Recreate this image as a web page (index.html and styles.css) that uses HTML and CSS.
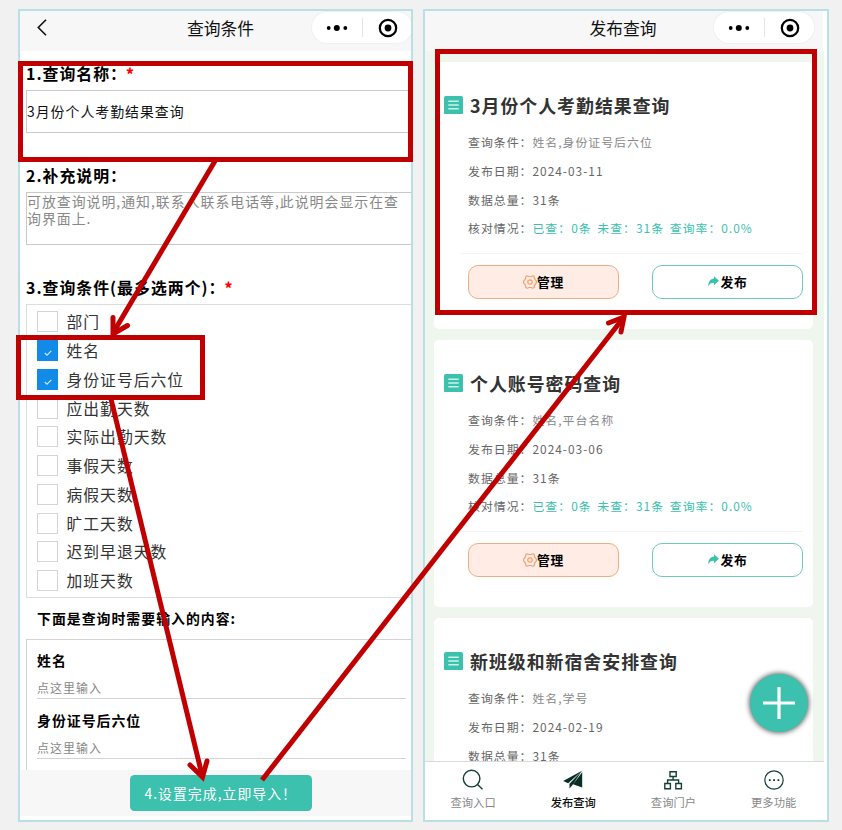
FILE: index.html
```html
<!DOCTYPE html>
<html lang="zh-CN">
<head>
<meta charset="utf-8">
<title>查询</title>
<link rel="stylesheet" href="styles.css">
</head>
<body>
<svg class="defs" width="0" height="0">
  <defs>
    <symbol id="list" viewBox="0 0 19 18.5"><rect width="19" height="18.5" rx="1.8" fill="#3bc1ad"/><path d="M4.3 5.3h10.4M4.3 9h10.4M4.3 12.7h10.4" stroke="#c9f3ea" stroke-width="1.5"/></symbol>
    <symbol id="gear" viewBox="0 0 14 14"><path d="M4.2.8 6 1.5H8L9.8.8 11.2 1.6 11.5 3.6 12.6 5.2 13.4 6.2V7.8L12.6 8.8 11.5 10.4 11.2 12.4 9.8 13.2 8 12.5H6L4.2 13.2 2.8 12.4 2.5 10.4 1.4 8.8.6 7.8V6.2L1.4 5.2 2.5 3.6 2.8 1.6Z" fill="none" stroke="#f5a070" stroke-width="1.2" stroke-linejoin="round"/><circle cx="7" cy="7" r="2.2" fill="none" stroke="#f5a070" stroke-width="1.2"/></symbol>
    <symbol id="share" viewBox="0 0 11 11"><path d="M6 .2 11 4.8 6 9.200V6.9C3.600 6.700 1.700 7.500.300 10.600.1 6 2.200 2.700 6 2.500Z" fill="#3bc1ad"/></symbol>
    <symbol id="capsule" viewBox="0 0 100 31"><circle cx="16.7" cy="16" r="1.9"/><circle cx="24.8" cy="16" r="3"/><circle cx="33.3" cy="16" r="1.9"/><path d="M50.5 6v19" stroke="#e4e4e4"/><circle cx="76" cy="16" r="8.2" fill="none" stroke="#000" stroke-width="2.2"/><circle cx="76" cy="16" r="3.4"/></symbol>
  </defs>
</svg>
<main class="stage">
  <section class="phone form-phone">
    <header class="bar">
      <svg class="back" viewBox="0 0 10 17"><path d="M9 .8 1.3 8.500 9 16.200" fill="none" stroke="#111" stroke-width="1.6"/></svg>
      <h1>查询条件</h1>
      <div class="capsule"><svg viewBox="0 0 100 31"><use href="#capsule"/></svg></div>
    </header>
    <div class="form">
      <h2 class="q q1">1.查询名称：<b>*</b></h2>
      <div class="input">3月份个人考勤结果查询</div>
      <h2 class="q q2">2.补充说明：</h2>
      <div class="textarea">可放查询说明,通知,联系人联系电话等,此说明会显示在查<br>询界面上.</div>
      <h2 class="q q3">3.查询条件(最多选两个)：<b>*</b></h2>
      <ul class="checks">
        <li><i></i>部门</li>
        <li><i class="on"><svg viewBox="0 0 8 6"><path d="M.8 3 3 5.2 7.3.8"/></svg></i>姓名</li>
        <li><i class="on"><svg viewBox="0 0 8 6"><path d="M.8 3 3 5.2 7.3.8"/></svg></i>身份证号后六位</li>
        <li><i></i>应出勤天数</li>
        <li><i></i>实际出勤天数</li>
        <li><i></i>事假天数</li>
        <li><i></i>病假天数</li>
        <li><i></i>旷工天数</li>
        <li><i></i>迟到早退天数</li>
        <li><i></i>加班天数</li>
      </ul>
      <h3 class="sub">下面是查询时需要输入的内容:</h3>
      <div class="fields">
        <div class="field"><strong>姓名</strong><span>点这里输入</span></div>
        <div class="field"><strong>身份证号后六位</strong><span>点这里输入</span></div>
      </div>
    </div>
    <footer class="submit"><div class="go">4.设置完成,立即导入！</div></footer>
  </section>

  <section class="phone list-phone">
    <header class="bar">
      <h1>发布查询</h1>
      <div class="capsule"><svg viewBox="0 0 100 31"><use href="#capsule"/></svg></div>
    </header>
    <div class="list">
      <article class="card">
        <h2><svg><use href="#list"/></svg>3月份个人考勤结果查询</h2>
        <dl>
          <div><dt>查询条件：</dt><dd class="soft">姓名,身份证号后六位</dd></div>
          <div><dt>发布日期：</dt><dd>2024-03-11</dd></div>
          <div><dt>数据总量：</dt><dd>31条</dd></div>
          <div><dt>核对情况：</dt><dd class="stat"><span>已查：0条</span><span>未查：31条</span><span>查询率：0.0%</span></dd></div>
        </dl>
        <div class="actions"><div class="btn manage"><svg><use href="#gear"/></svg>管理</div><div class="btn publish"><svg><use href="#share"/></svg>发布</div></div>
      </article>
      <article class="card">
        <h2><svg><use href="#list"/></svg>个人账号密码查询</h2>
        <dl>
          <div><dt>查询条件：</dt><dd class="soft">姓名,平台名称</dd></div>
          <div><dt>发布日期：</dt><dd>2024-03-06</dd></div>
          <div><dt>数据总量：</dt><dd>31条</dd></div>
          <div><dt>核对情况：</dt><dd class="stat"><span>已查：0条</span><span>未查：31条</span><span>查询率：0.0%</span></dd></div>
        </dl>
        <div class="actions"><div class="btn manage"><svg><use href="#gear"/></svg>管理</div><div class="btn publish"><svg><use href="#share"/></svg>发布</div></div>
      </article>
      <article class="card">
        <h2><svg><use href="#list"/></svg>新班级和新宿舍安排查询</h2>
        <dl>
          <div><dt>查询条件：</dt><dd class="soft">姓名,学号</dd></div>
          <div><dt>发布日期：</dt><dd>2024-02-19</dd></div>
          <div><dt>数据总量：</dt><dd>31条</dd></div>
        </dl>
      </article>
    </div>
    <div class="fab"><svg viewBox="0 0 58 58"><path d="M29 13v32M13 29h32" stroke="#fff" stroke-width="3.2"/></svg></div>
    <nav class="tabs">
      <div><svg viewBox="0 0 22 22"><circle cx="9.6" cy="9.6" r="8.3"/><path d="m15.5 15.5 5 4.7"/></svg>查询入口</div>
      <div class="active"><svg viewBox="0 0 22 22"><path class="solid" d="M20 1.8 1.2 12l5 2.2ZM20 1.8 7.5 14.8v4.8l2.8-3.3ZM20.2 3.2 11 15.3l9.2 3.2Z"/></svg>发布查询</div>
      <div><svg viewBox="0 0 22 22"><path d="M8 2.7h6.2v4.8H8ZM2.8 14.5h5.6v5.3H2.8ZM13.8 14.5h5.6v5.3h-5.6ZM11.1 7.5V11M5.6 14.500V11h11v3.500"/></svg>查询门户</div>
      <div><svg viewBox="0 0 22 22"><circle cx="11" cy="11" r="9.2" stroke-width="1.2"/><path class="solid" d="M5.9 10.2h1.7v1.7H5.9ZM10.2 10.2h1.7v1.7h-1.7ZM14.5 10.2h1.7v1.7h-1.7Z"/></svg>更多功能</div>
    </nav>
  </section>

  <svg class="notes" viewBox="0 0 842 830">
    <rect x="20.5" y="63.5" width="390" height="96"/>
    <rect x="18.5" y="337.5" width="184" height="60"/>
    <rect x="437.5" y="51.5" width="377" height="261"/>
    <path d="M215 161 113 333"/><path class="head" d="M113 317.5V334L127.5 325.5"/>
    <path d="m111 399 91.500 378"/><path class="head" d="m190 765 12.500 12L207 761"/>
    <path d="M262 780 624 317"/><path class="head" d="m608.500 323 15.500-6-3 15"/>
  </svg>
</main>
</body>
</html>
```
FILE: styles.css
```css
* { box-sizing: border-box; margin: 0; padding: 0; }
body {
  width: 842px; height: 830px; overflow: hidden; background: #f1f1f1;
  font-family: "Noto Sans CJK SC", sans-serif; letter-spacing: 1px; color: #000;
}
.defs { position: absolute; }
.stage { position: relative; display: flex; gap: 10px; height: 830px; padding: 9px 0 0 18px; }
.phone {
  position: relative; display: flex; flex-direction: column; height: 813px;
  border: 2px solid #b9e0e4; background: #fff; overflow: hidden;
}
.form-phone { width: 395px; }
.list-phone { width: 406px; }

.bar { position: relative; display: flex; flex: none; justify-content: center; height: 40px; background: #f7f7f7; }
.list-phone .bar { width: 398px; padding-right: 2px; }
.form-phone .bar { padding-left: 10px; }
.bar h1 { font-size: 16.8px; font-weight: 400; line-height: 34px; letter-spacing: 0; color: #111; }
.back { position: absolute; left: 17px; top: 8px; width: 10px; height: 17px; }
.capsule {
  position: absolute; left: 292px; top: 1px; width: 100px; height: 31px;
  border-radius: 16px; background: #fff; box-shadow: 0 0 1px 1px #f0f0f0;
}
.list-phone .capsule { left: 289px; }
.capsule svg { display: block; width: 100px; height: 31px; }

.form { flex: 1; min-height: 0; padding-left: 6px; overflow: hidden; }
.q { font-size: 15.9px; line-height: 24px; font-weight: 700; white-space: nowrap; }
.q b { margin-left: -1px; color: #f00; font-size: 15px; }
.q1 { padding-top: 11px; height: 39px; }
.q2 { padding-top: 31px; height: 59px; }
.q3 { padding-top: 31px; height: 59px; }
.input {
  width: 400px; height: 43px; border: 1px solid #c9c9c9; font-size: 13.9px; line-height: 41px; color: #111;
}
.textarea {
  width: 400px; height: 53px; border: 1px solid #c9c9c9; font-size: 13.9px;
  line-height: 17.4px; color: #888; white-space: nowrap;
}
.checks { width: 400px; height: 294px; border: 1px solid #ddd; padding: 2.400px 0 0 10px; list-style: none; }
.checks li { display: flex; align-items: center; height: 28.75px; font-size: 15.8px; color: #333; }
.checks i {
  display: flex; justify-content: center; width: 21px; height: 21px; margin-right: 8.5px; border: 1px solid #d4d4d4;
}
.checks .on { background: #128ae8; border-color: #128ae8; }
.checks .on svg { width: 8px; height: 6px; margin-top: 9px; fill: none; stroke: #c9edff; stroke-width: 1.1; }
.sub { height: 41px; padding-left: 11px; font-size: 13.9px; line-height: 41px; }
.fields { width: 400px; height: 160px; border: 1px solid #d4d4d4; padding: 8px 15px 0 10px; }
.field { width: 369px; height: 59.500px; padding-top: 1px; }
.field strong { display: block; font-size: 13.9px; line-height: 22px; }
.field span {
  display: block; height: 28px; border-bottom: 1px solid #d4d4d4;
  padding-top: 6px; font-size: 12px; line-height: 22px; color: #888;
}
.submit { flex: none; display: flex; justify-content: center; height: 50px; padding: 5px 0 9px 11px; background: linear-gradient(#f7f7f7 46px, #fff 46px); }
.go {
  width: 182px; height: 36px; padding-left: 14.500px; border-radius: 4.500px; background: #3bc1ad;
  color: #fff; font-size: 13.9px; line-height: 37px; white-space: nowrap;
}

.list { width: 399px; height: 710px; padding: 11px 11px 0 9px; background: #eff6ee; overflow: hidden; }
.card { height: 267px; margin-bottom: 11px; padding: 29px 10px 0; border-radius: 5px; background: #fff; }
.card h2 { display: flex; align-items: center; height: 28px; margin-bottom: 2px; font-size: 17.9px; color: #333; white-space: nowrap; }
.card h2 svg { width: 19px; height: 18.500px; margin: 0 7px 0 0; }
.card dl { height: 133px; margin-left: 17px; padding: 7.300px 0 0 7px; border-bottom: 1px solid #f3f3f3; }
.card dl div { display: flex; height: 28.700px; font-size: 11.900px; line-height: 28.600px; color: #666; white-space: nowrap; }
.card dd.soft { color: #888; }
.card dd.stat { display: flex; gap: 5.700px; color: #3bc1ad; }
.actions { display: flex; justify-content: space-between; padding: 11px 0 0 24px; }
.btn {
  display: flex; align-items: center; justify-content: center; width: 151px; height: 34px;
  border: 1px solid #6dcabb; border-radius: 10px; font-size: 12.800px; font-weight: 700; letter-spacing: .6px;
  padding-bottom: 1px;
}
.manage { background: #ffede5; border-color: #edae85; }
.manage svg { width: 14px; height: 14px; }
.publish svg { width: 11px; height: 11px; margin-right: 2px; }

.fab {
  position: absolute; left: 325px; top: 663px; width: 58px; height: 58px; border-radius: 50%;
  background: #3bc1ad; box-shadow: 0 0 5px 1px rgba(0, 0, 0, .6);
}
.fab svg { display: block; }
.tabs { position: relative; display: flex; width: 399px; height: 59px; border-top: 1px solid #d9dcdb; background: #fff; }
.tabs div {
  display: flex; flex-direction: column; align-items: center; width: 100.200px; flex: none;
  padding-top: 7px; font-size: 11.300px; line-height: 22px; letter-spacing: 0; color: #888;
}
.tabs div:first-child { margin-left: -2px; }
.tabs .active { color: #111; font-weight: 500; }
.tabs svg { width: 22px; height: 22px; fill: none; stroke: #153f35; stroke-width: 1.4; }
.tabs .solid { fill: #082d25; stroke: none; }

.notes { position: absolute; left: 0; top: 0; width: 842px; height: 830px; fill: none; stroke: #c00000; stroke-width: 5; }
.notes .head { stroke-linecap: round; }
```
